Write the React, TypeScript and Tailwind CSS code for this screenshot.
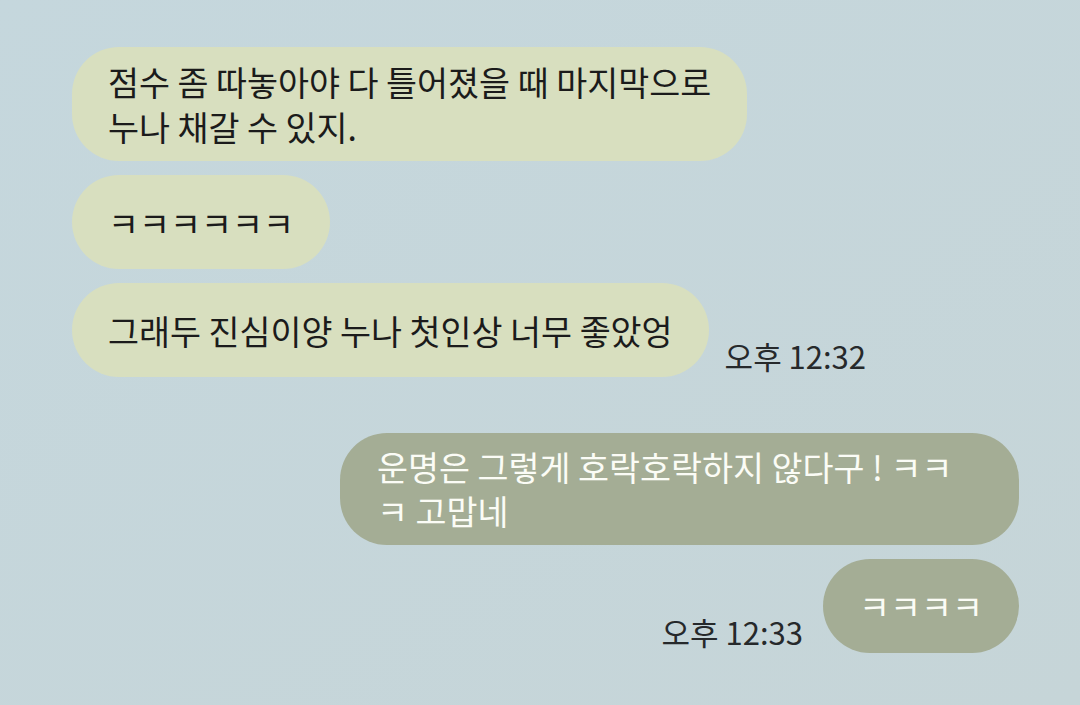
const font = { fontFamily: '"Noto Sans CJK KR", "Noto Sans", sans-serif' };

const Left = ({ children, multi }: { children: React.ReactNode; multi?: boolean }) => (
  <div
    className={`w-fit rounded-[47px] bg-[#d8dfbf] px-[36px] text-[33.7px] text-[#1b1b1b] ${
      multi ? "py-[12px] leading-[45px]" : "flex min-h-[94px] items-center leading-[45px]"
    }`}
  >
    <span>{children}</span>
  </div>
);

const Right = ({ children, multi }: { children: React.ReactNode; multi?: boolean }) => (
  <div
    className={`rounded-[47px] bg-[#a4ad95] text-[33.7px] text-[#fbfcf6] ${
      multi
        ? "w-[679px] px-[37px] py-[12px] leading-[44px]"
        : "flex min-h-[94px] w-fit items-center px-[36px] leading-[44px]"
    }`}
  >
    <span>{children}</span>
  </div>
);

const Time = ({ children }: { children: React.ReactNode }) => (
  <span className="whitespace-nowrap pb-[6px] text-[31px] leading-[30px] text-[#26292b]">{children}</span>
);

export default function App() {
  return (
    <div
      style={font}
      className="h-[705px] w-[1080px] overflow-hidden bg-gradient-to-br from-[#c5d7dd] to-[#c6d5d8] pl-[72px] pr-[61px] pt-[47px]"
    >
      <div className="flex flex-col items-start gap-[14px]">
        <Left multi>
          점수 좀 따놓아야 다 틀어졌을 때 마지막으로
          <br />
          누나 채갈 수 있지.
        </Left>
        <Left>ㅋㅋㅋㅋㅋㅋ</Left>
        <div className="flex items-end gap-[16px]">
          <Left>그래두 진심이양 누나 첫인상 너무 좋았엉</Left>
          <Time>오후 12:32</Time>
        </div>
      </div>

      <div className="mt-[56px] flex flex-col items-end gap-[14px]">
        <Right multi>
          운명은 그렇게 호락호락하지 않다구 ! ㅋㅋ
          <br />ㅋ 고맙네
        </Right>
        <div className="flex items-end gap-[20px]">
          <Time>오후 12:33</Time>
          <Right>ㅋㅋㅋㅋ</Right>
        </div>
      </div>
    </div>
  );
}
